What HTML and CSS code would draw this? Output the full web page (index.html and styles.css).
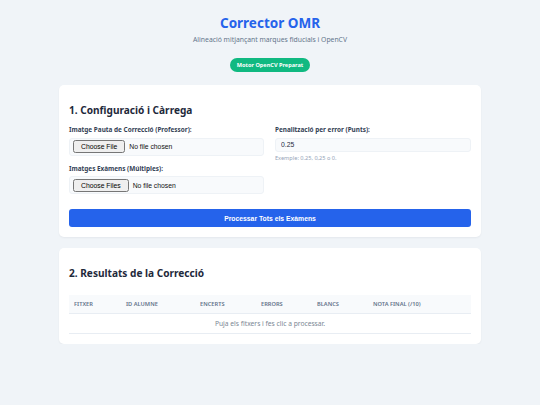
FILE: index.html
```html
<!DOCTYPE html>
<html lang="ca">
<head>
<meta charset="utf-8">
<title>Corrector OMR</title>
<link rel="stylesheet" href="styles.css">
</head>
<body>
<div class="container">
  <header class="header">
    <h1 class="title">Corrector OMR</h1>
    <p class="subtitle">Alineació mitjançant marques fiducials i OpenCV</p>
    <span class="badge">Motor OpenCV Preparat</span>
  </header>

  <section class="card">
    <h2 class="card-title">1. Configuració i Càrrega</h2>
    <div class="form-grid">
      <div class="col">
        <div class="field">
          <label class="label">Imatge Pauta de Correcció (Professor):</label>
          <div class="file-box"><input class="file" type="file"></div>
        </div>
        <div class="field">
          <label class="label">Imatges Exàmens (Múltiples):</label>
          <div class="file-box"><input class="file" type="file" multiple></div>
        </div>
      </div>
      <div class="col">
        <div class="field">
          <label class="label">Penalització per error (Punts):</label>
          <input class="text-input" type="text" value="0.25">
          <span class="hint">Exemple: 0.25, 0,25 o 0.</span>
        </div>
      </div>
    </div>
    <button class="btn">Processar Tots els Exàmens</button>
  </section>

  <section class="card">
    <h2 class="card-title">2. Resultats de la Correcció</h2>
    <table class="results">
      <thead>
        <tr>
          <th class="c1">Fitxer</th>
          <th class="c2">ID Alumne</th>
          <th class="c3">Encerts</th>
          <th class="c4">Errors</th>
          <th class="c5">Blancs</th>
          <th class="c6">Nota Final (/10)</th>
        </tr>
      </thead>
      <tbody>
        <tr><td class="empty" colspan="6">Puja els fitxers i fes clic a processar.</td></tr>
      </tbody>
    </table>
  </section>
</div>
</body>
</html>
```

FILE: styles.css
```css
* { box-sizing: border-box; }
body {
  margin: 0;
  background: #f0f4f8;
  font-family: "Noto Sans", "Open Sans", sans-serif;
  color: #1e293b;
}
.container {
  width: 422px;
  margin: 0 auto;
}
.header {
  text-align: center;
  padding-top: 13px;
}
.title {
  margin: 0;
  font-size: 13.5px;
  line-height: 20px;
  font-weight: 700;
  color: #2563eb;
}
.subtitle {
  margin: 2px 0 0;
  font-size: 6.8px;
  line-height: 10px;
  color: #64748b;
}
.badge {
  display: inline-block;
  margin-top: 12.5px;
  height: 14px;
  line-height: 14px;
  padding: 0 6.5px;
  border-radius: 7px;
  background: #10b981;
  color: #fff;
  font-size: 5.6px;
  font-weight: 700;
}
.card {
  background: #fff;
  border-radius: 5px;
  padding: 10px;
  margin-top: 13.5px;
  box-shadow: 0 1px 2px rgba(15, 23, 42, 0.05);
}
.card + .card { margin-top: 11px; }
.card-title {
  margin: 8px 0 7px;
  font-size: 10.1px;
  line-height: 15px;
  font-weight: 700;
  color: #1e293b;
}
.form-grid {
  display: grid;
  grid-template-columns: 195px 196px;
  column-gap: 11px;
}
.field { display: flex; flex-direction: column; }
.field + .field { margin-top: 8px; }
.label {
  font-size: 6.4px;
  line-height: 9px;
  font-weight: 700;
  color: #334155;
  margin-bottom: 3.5px;
}
.file-box {
  height: 18px;
  background: #f8fafc;
  border: 1px solid #eef2f6;
  border-radius: 3px;
  padding: 0 3px;
  display: flex;
  align-items: center;
}
.file {
  font-family: "Liberation Sans", Arial, sans-serif;
  font-size: 6.8px;
  color: #111;
}
.text-input {
  height: 14.5px;
  background: #f8fafc;
  border: 1px solid #eef2f6;
  border-radius: 3px;
  padding: 0 5px;
  font-family: "Liberation Sans", Arial, sans-serif;
  font-size: 6.8px;
  color: #1e293b;
  outline: none;
}
.hint {
  margin-top: 2px;
  font-size: 5.6px;
  line-height: 8px;
  color: #94a3b8;
}
.btn {
  display: block;
  width: 100%;
  height: 18px;
  margin-top: 15px;
  border: 0;
  border-radius: 3px;
  background: #2563eb;
  color: #fff;
  font-family: "Liberation Sans", Arial, sans-serif;
  font-size: 6.8px;
  font-weight: 700;
}
.results {
  width: 100%;
  margin-top: 14px;
  border-collapse: collapse;
  table-layout: fixed;
}
.results th {
  height: 18.5px;
  background: #f8fafc;
  border-bottom: 1px solid #e8edf3;
  text-align: left;
  padding: 0 5px;
  font-size: 5.7px;
  font-weight: 600;
  text-transform: uppercase;
  color: #64748b;
}
.c1 { width: 52px; }
.c2 { width: 74px; }
.c3 { width: 61px; }
.c4 { width: 56px; }
.c5 { width: 56px; }
.c6 { width: 103px; }
.results td.empty {
  height: 20px;
  text-align: center;
  font-size: 6.7px;
  color: #7b8794;
  border-bottom: 1px solid #e8edf3;
}
```
